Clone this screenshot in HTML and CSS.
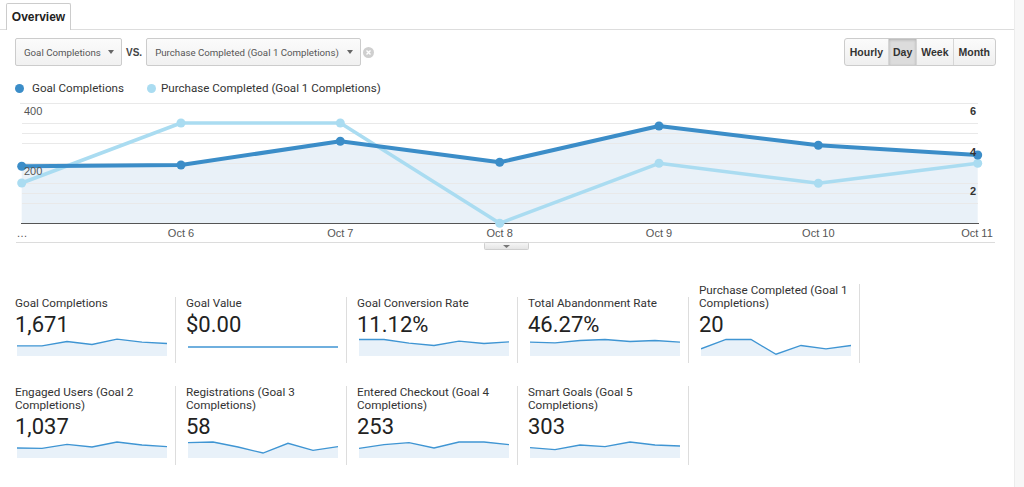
FILE: index.html
```html
<!DOCTYPE html>
<html lang="en">
<head>
    <meta charset="UTF-8">
    <meta name="viewport" content="width=device-width, initial-scale=1.0">
    <title>Goals Overview</title>
    <link rel="stylesheet" href="styles.css">
</head>
<body>
    <div class="main">
        <div class="tabs">
            <div class="tab">Overview</div>
        </div>

        <div class="controls">
            <div class="select select-metric">
                <span>Goal Completions</span>
                <span class="caret"></span>
            </div>
            <span class="vs">VS.</span>
            <div class="select select-compare">
                <span>Purchase Completed (Goal 1 Completions)</span>
                <span class="caret"></span>
            </div>
            <span class="clear">
                <svg width="11" height="11" viewBox="0 0 11 11">
                    <circle cx="5.5" cy="5.5" r="5.5" fill="#cfcfcf"/>
                    <path d="M3.5 3.5 L7.5 7.5 M7.5 3.5 L3.5 7.5" stroke="#fff" stroke-width="1.4"/>
                </svg>
            </span>

            <div class="range">
                <button>Hourly</button>
                <button class="active">Day</button>
                <button>Week</button>
                <button>Month</button>
            </div>
        </div>

        <div class="legend">
            <span class="dot dot-dark"></span>
            <span class="legend-label">Goal Completions</span>
            <span class="dot dot-light"></span>
            <span class="legend-label">Purchase Completed (Goal 1 Completions)</span>
        </div>

        <svg class="chart" width="1015" height="156" viewBox="0 96 1015 156">
            <defs>
                <linearGradient id="handleGrad" x1="0" y1="0" x2="0" y2="1">
                    <stop offset="0" stop-color="#f7f7f7"/>
                    <stop offset="1" stop-color="#e3e3e3"/>
                </linearGradient>
            </defs>

            <!-- area under goal completions -->
            <polygon points="21.7,166.3 181,165 340.3,141.3 499.7,162.3 659,126 818.3,145.3 977.7,155 977.7,223 21.7,223" fill="#e9f1f8"/>

            <!-- grid -->
            <g stroke="#e9e9e9" stroke-width="1">
                <line x1="20" y1="103.5" x2="978" y2="103.5"/>
                <line x1="22" y1="123.5" x2="978" y2="123.5"/>
                <line x1="22" y1="133.5" x2="978" y2="133.5"/>
                <line x1="22" y1="143.5" x2="978" y2="143.5"/>
                <line x1="22" y1="163.5" x2="978" y2="163.5"/>
                <line x1="22" y1="183.5" x2="978" y2="183.5"/>
                <line x1="22" y1="193.5" x2="978" y2="193.5"/>
                <line x1="22" y1="203.5" x2="978" y2="203.5"/>
            </g>
            <line x1="21" y1="223.5" x2="979" y2="223.5" stroke="#555" stroke-width="1.2"/>

            <!-- purchase completed -->
            <polyline points="21.7,183 181,123 340.3,123 499.7,223.3 659,163.3 818.3,183.3 977.7,163.3" fill="none" stroke="#aadcf1" stroke-width="3.5" stroke-linejoin="round"/>
            <g fill="#aadcf1">
                <circle cx="21.7" cy="183" r="4.5"/>
                <circle cx="181" cy="123" r="4.5"/>
                <circle cx="340.3" cy="123" r="4.5"/>
                <circle cx="499.7" cy="223.3" r="4.5"/>
                <circle cx="659" cy="163.3" r="4.5"/>
                <circle cx="818.3" cy="183.3" r="4.5"/>
                <circle cx="977.7" cy="163.3" r="4.5"/>
            </g>

            <!-- goal completions -->
            <polyline points="21.7,166.3 181,165 340.3,141.3 499.7,162.3 659,126 818.3,145.3 977.7,155" fill="none" stroke="#3b8dc8" stroke-width="4" stroke-linejoin="round"/>
            <g fill="#3b8dc8">
                <circle cx="21.7" cy="166.3" r="4.5"/>
                <circle cx="181" cy="165" r="4.5"/>
                <circle cx="340.3" cy="141.3" r="4.5"/>
                <circle cx="499.7" cy="162.3" r="4.5"/>
                <circle cx="659" cy="126" r="4.5"/>
                <circle cx="818.3" cy="145.3" r="4.5"/>
                <circle cx="977.7" cy="155" r="4.5"/>
            </g>

            <!-- axis labels -->
            <g class="axis-label">
                <text x="24" y="115">400</text>
                <text x="24" y="175">200</text>
            </g>
            <g class="axis-label axis-right" text-anchor="middle">
                <text x="973" y="115">6</text>
                <text x="973" y="156">4</text>
                <text x="973" y="195">2</text>
            </g>
            <g class="axis-label" text-anchor="middle">
                <text x="22" y="237">…</text>
                <text x="181" y="237">Oct 6</text>
                <text x="340.3" y="237">Oct 7</text>
                <text x="499.7" y="237">Oct 8</text>
                <text x="659" y="237">Oct 9</text>
                <text x="818.3" y="237">Oct 10</text>
                <text x="977" y="237">Oct 11</text>
            </g>

            <line x1="16" y1="242.5" x2="995" y2="242.5" stroke="#dcdcdc"/>
            <rect x="484.5" y="242.5" width="44" height="7" rx="1" fill="url(#handleGrad)" stroke="#cfcfcf"/>
            <polygon points="503,245 510,245 506.5,248" fill="#777"/>
        </svg>

        <div class="scorecards">
            <div class="score-row">
                <div class="card">
                    <div class="card-title">Goal Completions</div>
                    <div class="card-value">1,671</div>
                    <svg class="spark" width="150" height="18" viewBox="0 0 150 18">
                        <polygon points="0,7.8 25,7.8 50,3.5 75,6.5 100,1.2 125,4.2 150,5.5 150,18 0,18" fill="#e8f1f9"/>
                        <polyline points="0,7.8 25,7.8 50,3.5 75,6.5 100,1.2 125,4.2 150,5.5" fill="none" stroke="#3f95d3" stroke-width="1.3"/>
                    </svg>
                </div>
                <div class="card">
                    <div class="card-title">Goal Value</div>
                    <div class="card-value">$0.00</div>
                    <svg class="spark" width="150" height="18" viewBox="0 0 150 18">
                        <polyline points="0,9 150,9" fill="none" stroke="#3f95d3" stroke-width="1.3"/>
                    </svg>
                </div>
                <div class="card">
                    <div class="card-title">Goal Conversion Rate</div>
                    <div class="card-value">11.12%</div>
                    <svg class="spark" width="150" height="18" viewBox="0 0 150 18">
                        <polygon points="0,1.5 25,1.5 50,5.2 75,7.5 100,3.2 125,5.5 150,3.8 150,18 0,18" fill="#e8f1f9"/>
                        <polyline points="0,1.5 25,1.5 50,5.2 75,7.5 100,3.2 125,5.5 150,3.8" fill="none" stroke="#3f95d3" stroke-width="1.3"/>
                    </svg>
                </div>
                <div class="card">
                    <div class="card-title">Total Abandonment Rate</div>
                    <div class="card-value">46.27%</div>
                    <svg class="spark" width="150" height="18" viewBox="0 0 150 18">
                        <polygon points="0,4.2 25,4.8 50,2.5 75,1.5 100,3.5 125,2.5 150,4.2 150,18 0,18" fill="#e8f1f9"/>
                        <polyline points="0,4.2 25,4.8 50,2.5 75,1.5 100,3.5 125,2.5 150,4.2" fill="none" stroke="#3f95d3" stroke-width="1.3"/>
                    </svg>
                </div>
                <div class="card">
                    <div class="card-title">Purchase Completed (Goal 1 Completions)</div>
                    <div class="card-value">20</div>
                    <svg class="spark" width="150" height="18" viewBox="0 0 150 18">
                        <polygon points="0,10.8 25,1.5 50,1.5 75,16.2 100,7.5 125,10.8 150,7.5 150,18 0,18" fill="#e8f1f9"/>
                        <polyline points="0,10.8 25,1.5 50,1.5 75,16.2 100,7.5 125,10.8 150,7.5" fill="none" stroke="#3f95d3" stroke-width="1.3"/>
                    </svg>
                </div>
            </div>

            <div class="score-row">
                <div class="card">
                    <div class="card-title">Engaged Users (Goal 2 Completions)</div>
                    <div class="card-value">1,037</div>
                    <svg class="spark" width="150" height="18" viewBox="0 0 150 18">
                        <polygon points="0,8 25,8.3 50,4.3 75,7 100,2 125,5 150,6.7 150,18 0,18" fill="#e8f1f9"/>
                        <polyline points="0,8 25,8.3 50,4.3 75,7 100,2 125,5 150,6.7" fill="none" stroke="#3f95d3" stroke-width="1.3"/>
                    </svg>
                </div>
                <div class="card">
                    <div class="card-title">Registrations (Goal 3 Completions)</div>
                    <div class="card-value">58</div>
                    <svg class="spark" width="150" height="18" viewBox="0 0 150 18">
                        <polygon points="0,2.7 25,2 50,7 75,13 100,3.3 125,10.3 150,6.7 150,18 0,18" fill="#e8f1f9"/>
                        <polyline points="0,2.7 25,2 50,7 75,13 100,3.3 125,10.3 150,6.7" fill="none" stroke="#3f95d3" stroke-width="1.3"/>
                    </svg>
                </div>
                <div class="card">
                    <div class="card-title">Entered Checkout (Goal 4 Completions)</div>
                    <div class="card-value">253</div>
                    <svg class="spark" width="150" height="18" viewBox="0 0 150 18">
                        <polygon points="0,8.3 25,4.7 50,2.7 75,8 100,2 125,2 150,4.7 150,18 0,18" fill="#e8f1f9"/>
                        <polyline points="0,8.3 25,4.7 50,2.7 75,8 100,2 125,2 150,4.7" fill="none" stroke="#3f95d3" stroke-width="1.3"/>
                    </svg>
                </div>
                <div class="card">
                    <div class="card-title">Smart Goals (Goal 5 Completions)</div>
                    <div class="card-value">303</div>
                    <svg class="spark" width="150" height="18" viewBox="0 0 150 18">
                        <polygon points="0,7.7 25,9.7 50,5 75,6.7 100,2 125,5 150,6 150,18 0,18" fill="#e8f1f9"/>
                        <polyline points="0,7.7 25,9.7 50,5 75,6.7 100,2 125,5 150,6" fill="none" stroke="#3f95d3" stroke-width="1.3"/>
                    </svg>
                </div>
            </div>
        </div>
    </div>
</body>
</html>
```

FILE: styles.css
```css
* {
    margin: 0;
    padding: 0;
    box-sizing: border-box;
}

body {
    font-family: 'Roboto', 'Liberation Sans', sans-serif;
    background: #f7f7f7;
    color: #333;
}

.main {
    width: 1015px;
    height: 487px;
    background: #fff;
    border-right: 1px solid #ececec;
    overflow: hidden;
}

/* tab strip */
.tabs {
    display: flex;
    height: 30px;
    padding: 3px 0 0 6px;
    border-bottom: 1px solid #ddd;
}

.tab {
    width: 65px;
    height: 27px;
    margin-bottom: -1px;
    border: 1px solid #ccc;
    border-bottom: none;
    border-radius: 2px 2px 0 0;
    background: #fff;
    display: flex;
    align-items: center;
    justify-content: center;
    font: bold 12px 'Liberation Sans', Arial, sans-serif;
    color: #222;
}

/* selectors + range buttons */
.controls {
    display: flex;
    align-items: center;
    height: 28px;
    margin-top: 8px;
    padding: 0 18px 0 15px;
}

.select {
    height: 28px;
    display: flex;
    align-items: center;
    justify-content: space-between;
    padding: 0 7px 0 8px;
    border: 1px solid #ccc;
    border-radius: 2px;
    background: linear-gradient(#fbfbfb, #f1f1f1);
    font-size: 9.7px;
    color: #555;
}

.select-metric {
    width: 107px;
}

.select-compare {
    width: 215px;
}

.caret {
    width: 0;
    height: 0;
    border-left: 3.5px solid transparent;
    border-right: 3.5px solid transparent;
    border-top: 4px solid #666;
}

.vs {
    margin: 0 4px;
    font: bold 10px 'Liberation Sans', Arial, sans-serif;
    color: #444;
}

.clear {
    display: flex;
    margin-left: 2px;
}

.range {
    display: flex;
    margin-left: auto;
    height: 28px;
    border: 1px solid #ccc;
    border-radius: 3px;
    overflow: hidden;
    background: linear-gradient(#fbfbfb, #efefef);
}

.range button {
    padding: 0 4px;
    border: none;
    border-left: 1px solid #d6d6d6;
    background: transparent;
    font: bold 10.5px 'Liberation Sans', Arial, sans-serif;
    color: #333;
    cursor: pointer;
}

.range button:first-child {
    border-left: none;
    padding: 0 5px;
}

.range button:last-child {
    padding: 0 5px;
}

.range .active {
    background: #dcdcdc;
    box-shadow: inset 0 1px 3px rgba(0,0,0,0.2);
}

/* legend */
.legend {
    display: flex;
    align-items: center;
    height: 16px;
    margin-top: 14px;
    padding-left: 15px;
    font-size: 11.6px;
    color: #333;
}

.dot {
    width: 9px;
    height: 9px;
    border-radius: 50%;
    margin-right: 8px;
}

.dot-dark {
    background: #3b8dc8;
}

.dot-light {
    background: #aadcf1;
    margin-right: 5px;
}

.legend-label {
    margin-right: 23px;
}

/* chart */
.chart {
    display: block;
}

.axis-label {
    font: 11px 'Liberation Sans', Arial, sans-serif;
    fill: #555;
}

.axis-right {
    font-weight: bold;
    fill: #333;
}

/* scorecards */
.scorecards {
    margin-top: 32px;
    padding-left: 15px;
}

.score-row {
    display: flex;
    align-items: flex-end;
}

.score-row + .score-row {
    margin-top: 23px;
}

.card {
    width: 161px;
    margin-right: 10px;
    padding: 0 5px 7px 0;
    border-right: 1px solid #ddd;
}

.card-title {
    font-size: 11.7px;
    line-height: 13px;
    color: #333;
}

.card-value {
    margin-top: 2px;
    font-size: 22px;
    line-height: 26px;
    color: #222;
}

.spark {
    display: block;
    margin-left: 2px;
}
```
